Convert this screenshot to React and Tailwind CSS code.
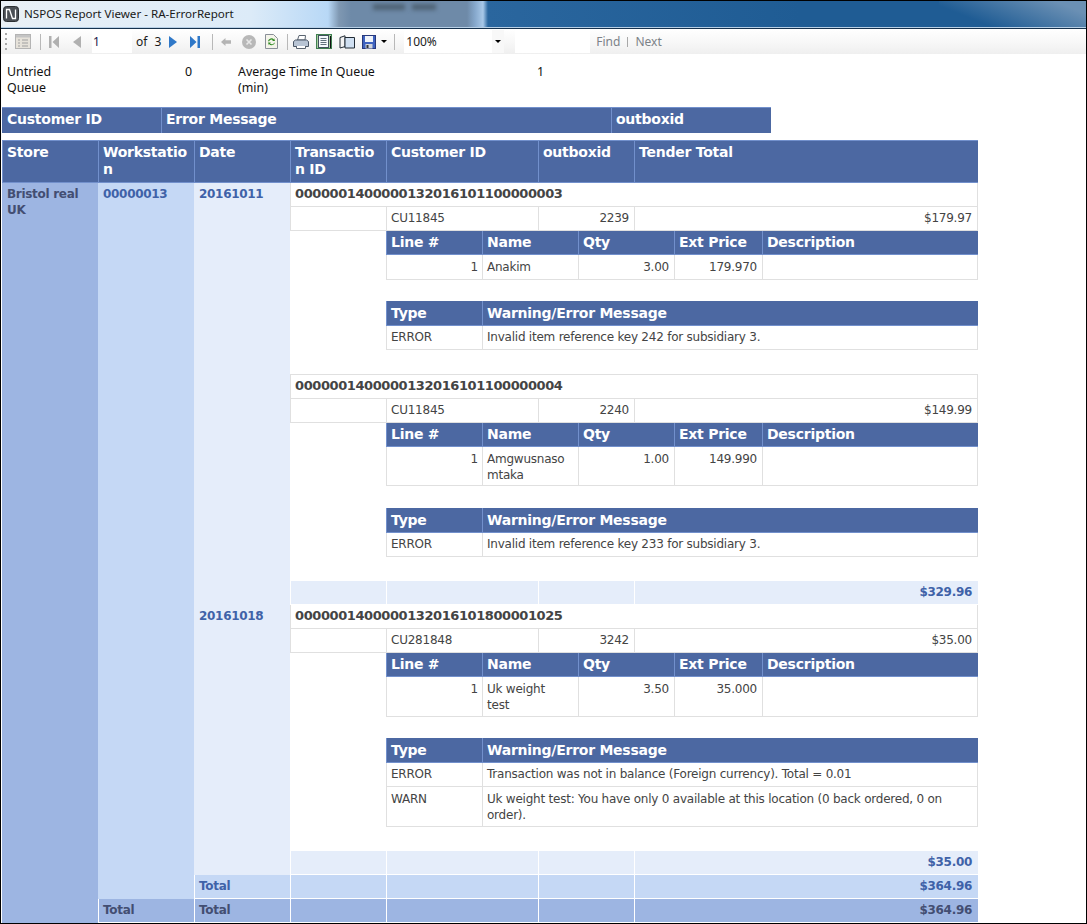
import React from "react";

const H = "bg-[#4c68a2] text-white font-bold text-[14px] tracking-[-0.25px] leading-[17px] align-top px-[4px] pt-[4px] border-l border-b border-[#7290cc] [overflow-wrap:anywhere]";
const Cell = "border-l border-b border-[#e0e0e0] bg-white text-[#444444] text-[12px] tracking-[-0.23px] leading-[16px] align-top px-[4px] pt-[4px] [overflow-wrap:anywhere]";
const Bold = "font-bold text-[12px] tracking-[-0.3px] leading-[16px] align-top";

function Grip() {
  return (
    <div className="flex flex-col gap-[3px] ml-[4px] w-[3px]">
      <span className="w-[2px] h-[2px] bg-[#a8a8a8]" />
      <span className="w-[2px] h-[2px] bg-[#a8a8a8]" />
      <span className="w-[2px] h-[2px] bg-[#a8a8a8]" />
      <span className="w-[2px] h-[2px] bg-[#a8a8a8]" />
    </div>
  );
}
const Sep = ({ className }) => <span className={"w-px h-[16px] bg-[#b8b8b8] shrink-0 " + className} />;

function Logo() {
  return (
    <svg width="16" height="16" viewBox="0 0 16 16" className="shrink-0">
      <rect x="0.5" y="0.5" width="15" height="15" rx="3" fill="#4a4f55" stroke="#2b2f33" />
      <path d="M3.5 12.5V3.5H6.5L9.5 12.5H12.5V3.5" fill="none" stroke="#fff" strokeWidth="1.3" />
    </svg>
  );
}

function Toolbar() {
  return (
    <div className="flex items-center h-[26px] bg-[linear-gradient(#ffffff,#f8f8f8_50%,#efefef)] font-['Noto_Sans',sans-serif] text-[12px] text-[#1a1a1a]">
      <Grip />
      <svg width="16" height="15" viewBox="0 0 16 15" className="ml-[7px] shrink-0">
        <rect x="0.5" y="0.5" width="15" height="14" fill="#e6e2da" stroke="#b4b4b4" />
        <rect x="1" y="1" width="14" height="2.5" fill="#c4c4c4" />
        <path d="M3 6h2M7 6h6M3 9h2M7 9h6M3 12h2M7 12h6" stroke="#a0a0a0" />
      </svg>
      <Sep className="ml-[9px]" />
      <svg width="10" height="12" viewBox="0 0 10 12" className="ml-[8px] shrink-0">
        <path d="M0 0h2.5v12H0zM10 0v12L3.5 6z" fill="#b0b0b0" />
      </svg>
      <svg width="8" height="12" viewBox="0 0 8 12" className="ml-[14px] shrink-0">
        <path d="M8 0v12L0 6z" fill="#b0b0b0" />
      </svg>
      <div className="ml-[11px] w-[40px] h-[23px] bg-white flex items-center pl-[1px] text-[12px] text-[#20204a]">1</div>
      <span className="ml-[4px]">of</span>
      <span className="ml-[7px]">3</span>
      <svg width="8" height="12" viewBox="0 0 8 12" className="ml-[8px] shrink-0">
        <path d="M0 0v12L8 6z" fill="#2f78c8" />
      </svg>
      <svg width="10" height="12" viewBox="0 0 10 12" className="ml-[13px] shrink-0">
        <path d="M0 0v12L6.5 6zM7.5 0H10v12H7.5z" fill="#2f78c8" />
      </svg>
      <Sep className="ml-[12px]" />
      <svg width="10" height="8" viewBox="0 0 10 8" className="ml-[8px] shrink-0">
        <path d="M0 4L4.5 0v2.2H10v3.6H4.5V8z" fill="#b4b4b4" />
      </svg>
      <svg width="14" height="14" viewBox="0 0 14 14" className="ml-[11px] shrink-0">
        <circle cx="7" cy="7" r="7" fill="#b8b8b8" />
        <path d="M4.5 4.5l5 5M9.5 4.5l-5 5" stroke="#e8e8e8" strokeWidth="1.6" />
      </svg>
      <svg width="13" height="15" viewBox="0 0 13 15" className="ml-[9px] shrink-0">
        <path d="M.5.5h8l4 4v10H.5z" fill="#f4f4ea" stroke="#8a8f98" />
        <path d="M3 7a3.5 3.5 0 0 1 6-1.5V4l1 3H7l1-.8A2.4 2.4 0 0 0 4 7.4zM10 8.5a3.5 3.5 0 0 1-6 1.5v1.5l-1-3h3l-1 .8a2.4 2.4 0 0 0 4-.4z" fill="#2f8a22" />
      </svg>
      <Sep className="ml-[9px]" />
      <svg width="16" height="14" viewBox="0 0 16 14" className="ml-[5px] shrink-0">
        <path d="M4.5 5L6 .5h6.5L12 5z" fill="#fff" stroke="#5a6470" />
        <path d="M.5 6.5 2.5 5h11l2 1.5v5H.5z" fill="#b8c4d4" stroke="#4a5666" />
        <path d="M3.5 11v2.5h9V11" fill="#fff" stroke="#5a6470" />
      </svg>
      <svg width="16" height="15" viewBox="0 0 16 15" className="ml-[7px] shrink-0">
        <rect x="0.5" y="0.5" width="15" height="14" fill="#a8cfa0" stroke="#3f7f50" />
        <rect x="2.5" y="1.5" width="10" height="12" fill="#f4f8fc" stroke="#40505c" />
        <path d="M4.5 4.5h6M4.5 6.5h6M4.5 8.5h6M4.5 10.5h6" stroke="#60707c" />
        <path d="M14.5 2v12" stroke="#111" />
      </svg>
      <svg width="16" height="14" viewBox="0 0 16 14" className="ml-[7px] shrink-0">
        <path d="M1 2.5 6 .8v10.8L1 13z" fill="#f4f4f4" stroke="#222c36" />
        <path d="M6 2.5h9.5v10.5H6z" fill="#d0e0f2" stroke="#222c36" />
      </svg>
      <svg width="14" height="14" viewBox="0 0 14 14" className="ml-[7px] shrink-0">
        <rect x="0.5" y="0.5" width="13" height="13" fill="#3f63c0" stroke="#28397c" />
        <rect x="3" y="1" width="8" height="6" fill="#f0f4fa" />
        <rect x="3.5" y="9" width="7" height="4.5" fill="#d0d4dc" />
        <rect x="4.5" y="10" width="2" height="3" fill="#30343c" />
      </svg>
      <span className="ml-[5px] w-0 h-0 border-l-[3px] border-r-[3px] border-t-[3px] border-l-transparent border-r-transparent border-t-black shrink-0" />
      <Sep className="ml-[7px]" />
      <div className="ml-[9px] w-[100px] h-[23px] bg-white flex items-center justify-between pl-[2px] text-[#222222]">
        <span>100%</span>
        <span className="w-[12px] h-full bg-[#f8f8f8] flex items-center justify-center">
          <span className="w-0 h-0 border-l-[3px] border-r-[3px] border-t-[3px] border-l-transparent border-r-transparent border-t-black" />
        </span>
      </div>
      <div className="ml-[11px] w-[75px] h-[23px] bg-white" />
      <span className="ml-[6px] text-[#7c8288]">Find</span>
      <span className="ml-[7px] w-px h-[10px] bg-[#a8a8a8]" />
      <span className="ml-[7px] text-[#7c8288]">Next</span>
    </div>
  );
}

function Nested({ cols, head, rows, rowH, headH, headPt }) {
  return (
    <table className="table-fixed border-separate border-spacing-0 w-[592px]">
      <colgroup>
        {cols.map((c, i) => (
          <col key={i} style={{ width: c }} />
        ))}
      </colgroup>
      <thead>
        <tr style={{ height: headH }}>
          {head.map((h, i) => (
            <th key={i} className={H + " text-left " + headPt}>{h}</th>
          ))}
        </tr>
      </thead>
      <tbody>
        {rows.map((r, i) => (
          <tr key={i} style={{ height: rowH[i] }}>
            {r.map((c, j) => (
              <td key={j} className={Cell + (j === r.length - 1 ? " border-r" : "") + (c.right ? " text-right" : "") + (c.right && j > 0 ? " !pr-[5px]" : "") + (r[0].t === "ERROR" ? " !pt-[3px]" : "")}>
                {c.t}
              </td>
            ))}
          </tr>
        ))}
      </tbody>
    </table>
  );
}

const LC = [96, 96, 96, 88, 216];
const LH = ["Line #", "Name", "Qty", "Ext Price", "Description"];

function Detail({ line, msgs, gap1, gap2, rowH, msgH }) {
  return (
    <div className="flex flex-col">
      <Nested cols={LC} head={LH} headH={24} headPt="!pt-[3px]" rows={[[{ t: "1", right: true }, { t: line[0] }, { t: line[1], right: true }, { t: line[2], right: true }, { t: "" }]]} rowH={[rowH]} />
      <div style={{ height: gap1 }} />
      <Nested cols={[96, 496]} head={["Type", "Warning/Error Message"]} headH={25} headPt="" rows={msgs} rowH={msgH} />
      <div style={{ height: gap2 }} />
    </div>
  );
}

const sub = Bold + " bg-[#e5edfa] border-l border-b border-white text-[#3f62a8] px-[4px] pt-[3px]";
const tot = Bold + " bg-[#c5d8f5] border-l border-b border-white text-[#3f62a8] px-[4px] pt-[3px]";
const grand = Bold + " bg-[#9db5e2] border-l border-b border-white text-[#434e72] px-[4px] pt-[3px]";
const txn = "border-l border-r border-b border-[#e0e0e0] bg-white text-[#444444] font-bold text-[13px] tracking-[-0.42px] leading-[16px] align-top px-[4px] pt-[3px]";

function CustRow({ cust, box, amt }) {
  return (
    <tr className="h-[24px]">
      <td className={Cell + " !pt-[3px]"} />
      <td className={Cell + " !pt-[3px]"}>{cust}</td>
      <td className={Cell + " !pt-[3px] text-right !pr-[5px]"}>{box}</td>
      <td className={Cell + " !pt-[3px] text-right border-r !pr-[5px]"}>{amt}</td>
    </tr>
  );
}

function SubRow({ amt }) {
  return (
    <tr className="h-[24px]">
      <td className={sub} />
      <td className={sub} />
      <td className={sub} />
      <td className={sub + " text-right !pr-[6px]"}>{amt}</td>
    </tr>
  );
}

export default function App() {
  return (
    <div className="w-[1087px] h-[924px] overflow-hidden border border-black bg-white font-['DejaVu_Sans',sans-serif] flex flex-col">
      <div className="relative h-[26px] shrink-0 flex items-center overflow-hidden bg-[linear-gradient(90deg,#e9f0f6_0,#dcebf8_250px,#b8d8f6_327px,#7f98b2_338px,#6e8aa8_350px,#6e8aa8_466px,#86a8cc_474px,#a8c8e8_482px,#2a669e_487px,#1f5c94_800px,#1f5c94_1087px)] font-['Noto_Sans',sans-serif] text-[11.6px] text-[#1a1a1a]">
        <div className="absolute left-[372px] top-[3px] w-[32px] h-[6px] bg-[#4e6274] blur-[2px]" />
        <div className="absolute left-[411px] top-[3px] w-[24px] h-[6px] bg-[#4e6274] blur-[2px]" />
        <div className="absolute right-0 top-0 w-[147px] h-full bg-[linear-gradient(22deg,#1f5c94_25%,#6b90b4_85%)]" />
        <div className="ml-[2px]"><Logo /></div>
        <span className="ml-[5px] relative">NSPOS Report Viewer - RA-ErrorReport</span>
      </div>
      <div className="h-px bg-[#b8d0e6] shrink-0" />
      <div className="h-px bg-[#16324e] shrink-0" />
      <Toolbar />

      <div className="flex items-start pl-[6px] pt-[10px] h-[53px] shrink-0 font-['Noto_Sans',sans-serif] text-[12.4px] leading-[16px] text-[#111111]">
        <div className="w-[75px]">Untried Queue</div>
        <div className="w-[110px] text-right">0</div>
        <div className="ml-[46px] w-[160px]">Average Time In Queue (min)</div>
        <div className="ml-[139px]">1</div>
      </div>

      <div className="ml-px flex shrink-0 h-[26px] text-white font-bold text-[14px] tracking-[-0.25px] leading-[17px] w-[769px] border-t border-[#7290cc] bg-[#4c68a2]">
        <div className="w-[160px] pl-[5px] pt-[3px] border-r border-[#7290cc]">Customer ID</div>
        <div className="w-[450px] pl-[4px] pt-[3px] border-r border-[#7290cc]">Error Message</div>
        <div className="flex-1 pl-[4px] pt-[3px]">outboxid</div>
      </div>
      <div className="h-[7px] shrink-0" />

      <table className="ml-px table-fixed border-separate border-spacing-0 w-[976px] shrink-0">
        <colgroup>
          <col className="w-[96px]" />
          <col className="w-[96px]" />
          <col className="w-[96px]" />
          <col className="w-[96px]" />
          <col className="w-[152px]" />
          <col className="w-[96px]" />
          <col className="w-[344px]" />
        </colgroup>
        <thead>
          <tr className="h-[43px]">
            {["Store", "Workstation", "Date", "Transaction ID", "Customer ID", "outboxid", "Tender Total"].map((h) => (
              <th key={h} className={H + " text-left border-t !pt-[3px]"}>{h}</th>
            ))}
          </tr>
        </thead>
        <tbody>
          <tr className="h-[24px]">
            <td rowSpan={13} className={Bold + " bg-[#9db5e2] text-[#434e72] px-[5px] pt-[3px]"}>Bristol real UK</td>
            <td rowSpan={12} className={Bold + " bg-[#c5d8f5] text-[#3f62a8] px-[5px] pt-[3px]"}>00000013</td>
            <td rowSpan={7} className={Bold + " bg-[#e5edfa] text-[#3f62a8] px-[5px] pt-[3px]"}>20161011</td>
            <td colSpan={4} className={txn}>0000001400000132016101100000003</td>
          </tr>
          <CustRow cust="CU11845" box="2239" amt="$179.97" />
          <tr className="h-[143px]">
            <td className="bg-white" />
            <td colSpan={3} className="bg-white align-top">
              <Detail line={["Anakim", "3.00", "179.970"]} rowH={25} gap1={21} gap2={24} msgH={[24]} msgs={[[{ t: "ERROR" }, { t: "Invalid item reference key 242 for subsidiary 3." }]]} />
            </td>
          </tr>
          <tr className="h-[25px]">
            <td colSpan={4} className={txn + " border-t"}>0000001400000132016101100000004</td>
          </tr>
          <CustRow cust="CU11845" box="2240" amt="$149.99" />
          <tr className="h-[158px]">
            <td className="bg-white" />
            <td colSpan={3} className="bg-white align-top">
              <Detail line={["Amgwusnasomtaka", "1.00", "149.990"]} rowH={39} gap1={22} gap2={24} msgH={[24]} msgs={[[{ t: "ERROR" }, { t: "Invalid item reference key 233 for subsidiary 3." }]]} />
            </td>
          </tr>
          <SubRow amt="$329.96" />
          <tr className="h-[24px]">
            <td rowSpan={4} className={Bold + " bg-[#e5edfa] text-[#3f62a8] px-[5px] pt-[3px]"}>20161018</td>
            <td colSpan={4} className={txn}>0000001400000132016101800001025</td>
          </tr>
          <CustRow cust="CU281848" box="3242" amt="$35.00" />
          <tr className="h-[198px]">
            <td className="bg-white" />
            <td colSpan={3} className="bg-white align-top">
              <Detail line={[<>Uk weight<br />test</>, "3.50", "35.000"]} rowH={40} gap1={21} gap2={24} msgH={[24, 40]} msgs={[
                [{ t: "ERROR" }, { t: "Transaction was not in balance (Foreign currency). Total = 0.01" }],
                [{ t: "WARN" }, { t: "Uk weight test: You have only 0 available at this location (0 back ordered, 0 on order)." }],
              ]} />
            </td>
          </tr>
          <SubRow amt="$35.00" />
          <tr className="h-[24px]">
            <td className={tot}>Total</td>
            <td className={tot} />
            <td className={tot} />
            <td className={tot} />
            <td className={tot + " text-right !pr-[6px]"}>$364.96</td>
          </tr>
          <tr className="h-[24px]">
            <td className={grand}>Total</td>
            <td className={grand}>Total</td>
            <td className={grand} />
            <td className={grand} />
            <td className={grand} />
            <td className={grand + " text-right !pr-[6px]"}>$364.96</td>
          </tr>
        </tbody>
      </table>
    </div>
  );
}
